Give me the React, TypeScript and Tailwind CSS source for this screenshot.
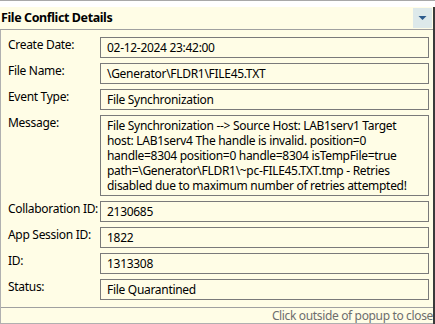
import React from "react";

const font = { fontFamily: '"Segoe UI", "Noto Sans", "Open Sans", sans-serif' };

function Row({ label, value, tall }: { label: string; value: React.ReactNode; tall?: boolean }) {
  return (
    <>
      <div className="text-[12px] leading-[15px] tracking-[-0.3px] text-black pl-[7px] whitespace-nowrap">{label}</div>
      <div
        className={
          "border border-[#7a7a7a] bg-[#fffde6] text-[12px] leading-[15px] tracking-[-0.3px] text-black pl-[6px] pt-[2px] whitespace-nowrap overflow-hidden " +
          (tall ? "h-[81px]" : "h-[21px]")
        }
      >
        {value}
      </div>
    </>
  );
}

export default function App() {
  return (
    <div className="w-[435px] h-[324px] bg-white flex flex-col border-t border-[#a8a8a8] overflow-hidden" style={font}>
      <div className="h-[6px] bg-white" />
      <div className="flex-1 flex flex-col bg-[#fffde6] border-r-2 border-[#3a3a3a]">
        <div className="h-[23px] flex items-center justify-between border-b border-[#a0a0a0]">
          <div className="pl-[1px] text-[12.5px] tracking-[-0.4px] font-bold text-black">File Conflict Details</div>
          <div className="w-[19px] h-[20px] mr-[1px] bg-[#dde9ea] flex items-center justify-center">
            <svg width="9" height="6" viewBox="0 0 9 6">
              <polygon points="0.5,1 8.5,1 4.5,5" fill="#2d5b8c" />
            </svg>
          </div>
        </div>
        <div className="flex-1 flex flex-col border-l border-[#b0b0b0] border-b">
          <div className="grid grid-cols-[99px_329px] gap-y-[5px] pt-[7px] flex-1 content-start">
            <Row label="Create Date:" value="02-12-2024 23:42:00" />
            <Row label="File Name:" value="\Generator\FLDR1\FILE45.TXT" />
            <Row label="Event Type:" value="File Synchronization" />
            <Row
              label="Message:"
              tall
              value={
                <>
                  <div>File Synchronization --&gt; Source Host: LAB1serv1 Target</div>
                  <div>host: LAB1serv4 The handle is invalid. position=0</div>
                  <div>handle=8304 position=0 handle=8304 isTempFile=true</div>
                  <div>path=\Generator\FLDR1\~pc-FILE45.TXT.tmp - Retries</div>
                  <div>disabled due to maximum number of retries attempted!</div>
                </>
              }
            />
            <Row label="Collaboration ID:" value="2130685" />
            <Row label="App Session ID:" value="1822" />
            <Row label="ID:" value="1313308" />
            <Row label="Status:" value="File Quarantined" />
          </div>
          <div className="h-[16px] border-t border-[#a0a0a0] flex items-center justify-end">
            <span className="text-[12px] leading-[15px] text-[#6d6d6d] tracking-[-0.35px]">Click outside of popup to close</span>
          </div>
        </div>
      </div>
    </div>
  );
}
